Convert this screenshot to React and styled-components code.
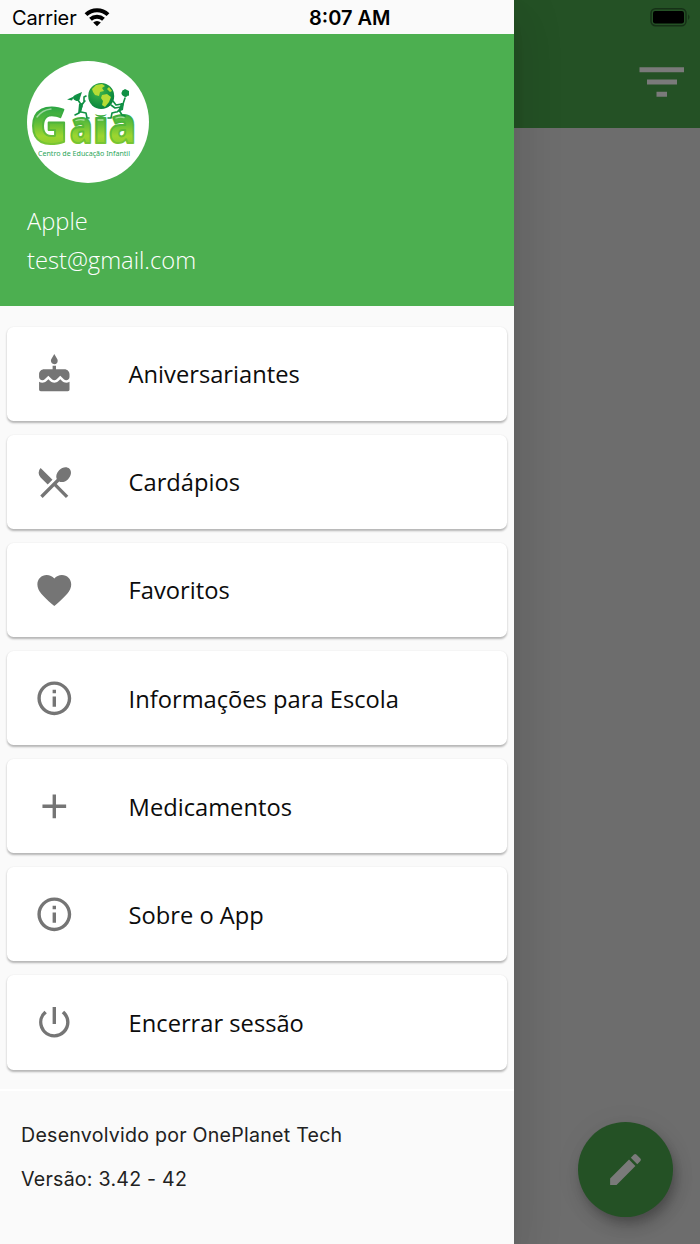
import React from 'react';
import styled, { createGlobalStyle } from 'styled-components';
import {
  MdCake,
  MdFavorite,
  MdInfoOutline,
  MdAdd,
  MdPowerSettingsNew,
  MdEdit,
} from 'react-icons/md';

const GlobalStyle = createGlobalStyle`
  * {
    box-sizing: border-box;
  }
  body {
    margin: 0;
    background: #6d6d6d;
    font-family: 'Open Sans', sans-serif;
  }
`;

const Screen = styled.div`
  position: relative;
  width: 700px;
  height: 1244px;
  overflow: hidden;
  background: #6d6d6d;
`;

/* page behind the drawer */
const AppBar = styled.header`
  display: flex;
  flex-direction: column;
  align-items: flex-end;
  height: 128.4px;
  padding-top: 7px;
  background: #245125;
`;

const BatteryIcon = styled.svg`
  width: 42px;
  height: 20px;
  margin-right: 8px;
`;

const FilterIcon = styled.svg`
  width: 45px;
  height: 31px;
  margin: 39.5px 16px 0 0;
  fill: #7a7a7a;
`;

const Fab = styled.button`
  position: absolute;
  right: 27px;
  bottom: 27px;
  display: flex;
  align-items: center;
  justify-content: center;
  width: 95px;
  height: 95px;
  padding: 0;
  border: none;
  border-radius: 50%;
  background: #245125;
  color: #7a7a7a;
  font-size: 41px;
  box-shadow: 3px 6px 8px -1px rgba(0, 0, 0, 0.16), 4px 10px 17px rgba(0, 0, 0, 0.16),
    0 2px 30px rgba(0, 0, 0, 0.05);
`;

const Drawer = styled.aside`
  position: absolute;
  top: 0;
  left: 0;
  display: flex;
  flex-direction: column;
  width: 514px;
  height: 100%;
  background: #fafafa;
  box-shadow: 0 14px 17px -8px rgba(0, 0, 0, 0.1), 0 27px 40px 3px rgba(0, 0, 0, 0.07),
    0 10px 50px 8px rgba(0, 0, 0, 0.06);
`;

const StatusBar = styled.div`
  display: flex;
  align-items: center;
  height: 34px;
  padding: 2px 0 0 12px;
  font-family: Inter, sans-serif;
  font-size: 20px;
  line-height: 32px;
  color: #000;
`;

const Carrier = styled.span`
  width: 64px;
  letter-spacing: -0.15px;
  white-space: nowrap;
`;

const WifiIcon = styled.svg`
  width: 26px;
  height: 20px;
  margin: 0 0 3px 8px;
`;

const Clock = styled.span`
  margin-left: 199px;
  font-weight: 600;
  white-space: nowrap;
`;

const Profile = styled.section`
  height: 272px;
  padding: 27px 27px 0;
  background: #4caf50;
`;

const Logo = styled.svg`
  display: block;
  width: 122px;
  height: 122px;
`;

const UserLine = styled.p`
  margin: ${(props) => props.$top || 0}px 0 0;
  font-size: 23.7px;
  font-weight: 300;
  line-height: 32px;
  color: #fff;
`;

const Menu = styled.nav`
  display: flex;
  flex-direction: column;
  gap: 13.6px;
  height: 784.5px;
  padding: 20.5px 7px 0;
  border-bottom: 2px solid #fff;
`;

const MenuCard = styled.a`
  display: flex;
  flex: none;
  align-items: center;
  height: 94.5px;
  padding-left: 27px;
  border-radius: 6.5px;
  background: #fff;
  box-shadow: 0 1.5px 2px rgba(0, 0, 0, 0.22), 0 1.5px 3px rgba(0, 0, 0, 0.07);
`;

const MenuIcon = styled.span`
  display: flex;
  width: 40.6px;
  margin: 0.5px 54px 0 0;
  font-size: 40.6px;
  color: #757575;
`;

const MenuLabel = styled.span`
  padding-top: 1px;
  font-size: 23.7px;
  line-height: 32px;
  color: #0c0c0c;
  white-space: nowrap;
`;

const Footer = styled.footer`
  display: flex;
  flex-direction: column;
  gap: 14px;
  padding: 29.5px 21px 0;
  font-family: Inter, sans-serif;
  font-size: 19.6px;
  line-height: 30px;
  letter-spacing: 0.24px;
  color: #212121;
`;

// crossed knife and spoon
const CutleryIcon = () => (
  <svg width="1em" height="1em" viewBox="0 0 24 24" fill="currentColor">
    <path d="M8.1 13.34l2.83-2.83L3.91 3.5a4.008 4.008 0 0 0 0 5.66l4.19 4.18zm6.78-1.81c1.53.71 3.68.21 5.27-1.38 1.91-1.91 2.28-4.65.81-6.12-1.46-1.46-4.2-1.1-6.12.81-1.59 1.59-2.09 3.74-1.38 5.27L3.7 19.87l1.41 1.41L12 14.41l6.88 6.88 1.41-1.41L13.41 13l1.47-1.47z" />
  </svg>
);

const menuItems = [
  { label: 'Aniversariantes', icon: <MdCake /> },
  { label: 'Cardápios', icon: <CutleryIcon /> },
  { label: 'Favoritos', icon: <MdFavorite /> },
  { label: 'Informações para Escola', icon: <MdInfoOutline /> },
  { label: 'Medicamentos', icon: <MdAdd /> },
  { label: 'Sobre o App', icon: <MdInfoOutline /> },
  { label: 'Encerrar sessão', icon: <MdPowerSettingsNew /> },
];

function GaiaLogo() {
  return (
    <Logo viewBox="0 0 122 122">
      <defs>
        <linearGradient id="letters" gradientUnits="userSpaceOnUse" x1="0" y1="45" x2="0" y2="85">
          <stop offset="0" stopColor="#2ba544" />
          <stop offset="0.4" stopColor="#5cbc3a" />
          <stop offset="0.75" stopColor="#9dd62f" />
          <stop offset="1" stopColor="#8bcd30" />
        </linearGradient>
        <linearGradient id="edge" gradientUnits="userSpaceOnUse" x1="0" y1="45" x2="0" y2="85">
          <stop offset="0" stopColor="#2ba544" />
          <stop offset="1" stopColor="#7ec832" />
        </linearGradient>
        <radialGradient id="globe" cx="0.4" cy="0.35" r="0.65">
          <stop offset="0" stopColor="#3fb54a" />
          <stop offset="1" stopColor="#07853c" />
        </radialGradient>
      </defs>
      <circle cx="61" cy="61" r="61" fill="#fff" />
      <g
        fontFamily="'Open Sans', sans-serif"
        fontWeight="800"
        fill="url(#letters)"
        stroke="url(#edge)"
        strokeWidth="2"
        strokeLinejoin="round"
      >
        <text x="3.5" y="83" fontSize="50" textLength="37" lengthAdjust="spacingAndGlyphs">G</text>
        <text x="43" y="81.5" fontSize="45" textLength="22.5" lengthAdjust="spacingAndGlyphs">a</text>
        <text x="66" y="81.5" fontSize="45" textLength="15.5" lengthAdjust="spacingAndGlyphs">i</text>
        <text x="82" y="82" fontSize="49" textLength="27" lengthAdjust="spacingAndGlyphs">a</text>
      </g>
      {/* gloss on the letters */}
      <g fill="none" stroke="#fff" strokeOpacity="0.5" strokeWidth="1.3" strokeLinecap="round">
        <path d="M10 56q5-7 14-8" />
        <path d="M49 59.5q4-1.5 8-.5" />
        <path d="M71 59h5" />
        <path d="M89 57q4-1.5 8-.5" />
      </g>
      {/* globe */}
      <circle cx="74" cy="37.5" r="16.8" fill="#fff" />
      <circle cx="74.2" cy="35" r="13" fill="url(#globe)" />
      <path
        d="M65 28l4-4 6-1 3 2-3 2 2 3-4 1-1 4-4-1-2-3zM75 34l5-1 4 3-2 5-4 5-3-2 1-4-2-3zM82 26l3 4-2 1-3-3z"
        fill="#b5dc35"
      />
      {/* children holding the globe */}
      <g fill="none" stroke="#109044" strokeWidth="1.6" strokeLinecap="round" strokeLinejoin="round">
        <path d="M51 39l4 6-2 6M54 45l3-4 0-5 2-1M54 44l4-4M52 52l-4 2M54 51l5 1 1 5h2" />
        <path d="M98 37l-3 9-5 5M94 46l-6 1-4-3M95 43l-6 1-3-4M92 49l3 5 3 1M89 51l-4 1-1 5h-3" />
      </g>
      <g fill="#109044">
        <ellipse cx="49.5" cy="37" rx="3.5" ry="2.7" transform="rotate(25 49.5 37)" />
        <path d="M47 35.5l-7 3 5 1zM48 34l7-3-2 6zM52 43l4 0-2 8-3 2z" />
        <ellipse cx="98" cy="32.5" rx="3.6" ry="3" transform="rotate(35 98 32.5)" />
        <path d="M95 30l3-2 4 2v5zM94 42l3 0-1 7-5 2z" />
      </g>
      <text
        x="11"
        y="95"
        fontFamily="'Noto Sans', sans-serif"
        fontSize="7.8"
        fill="#2aa559"
        textLength="92"
        lengthAdjust="spacingAndGlyphs"
      >
        Centro de Educação Infantil
      </text>
    </Logo>
  );
}

function App() {
  return (
    <Screen>
      <GlobalStyle />
      <AppBar>
        <BatteryIcon viewBox="0 0 42 20">
          <rect x="1" y="1.7" width="35" height="17" rx="4.5" fill="none" stroke="#163117" strokeWidth="1.5" />
          <rect x="3" y="4" width="31" height="12.5" rx="2.2" fill="#000" />
          <path d="M38.2 7.2q2.6 2.8 0 5.8z" fill="#163117" />
        </BatteryIcon>
        <FilterIcon viewBox="0 0 45 31">
          <path d="M.5.2H45v5H.5zM8 12.5h30v5H8zM17.500 24.700H28v5H17.500z" />
        </FilterIcon>
      </AppBar>
      <Fab aria-label="edit">
        <MdEdit />
      </Fab>

      <Drawer>
        <StatusBar>
          <Carrier>Carrier</Carrier>
          <WifiIcon viewBox="0 0 26 20">
            <g fill="none" stroke="#000" strokeWidth="4">
              <path d="M2 7.6a15.8 15.8 0 0 1 22 0" />
              <path d="M6.5 12.3a9.5 9.5 0 0 1 13 0" />
            </g>
            <path d="M13 19.3l-3.8-3.8a5.3 5.3 0 0 1 7.6 0z" />
          </WifiIcon>
          <Clock>8:07 AM</Clock>
        </StatusBar>
        <Profile>
          <GaiaLogo />
          <UserLine $top={22}>Apple</UserLine>
          <UserLine $top={7}>test@gmail.com</UserLine>
        </Profile>
        <Menu>
          {menuItems.map((item) => (
            <MenuCard key={item.label}>
              <MenuIcon>{item.icon}</MenuIcon>
              <MenuLabel>{item.label}</MenuLabel>
            </MenuCard>
          ))}
        </Menu>
        <Footer>
          <span>Desenvolvido por OnePlanet Tech</span>
          <span>Versão: 3.42 - 42</span>
        </Footer>
      </Drawer>
    </Screen>
  );
}

export default App;
